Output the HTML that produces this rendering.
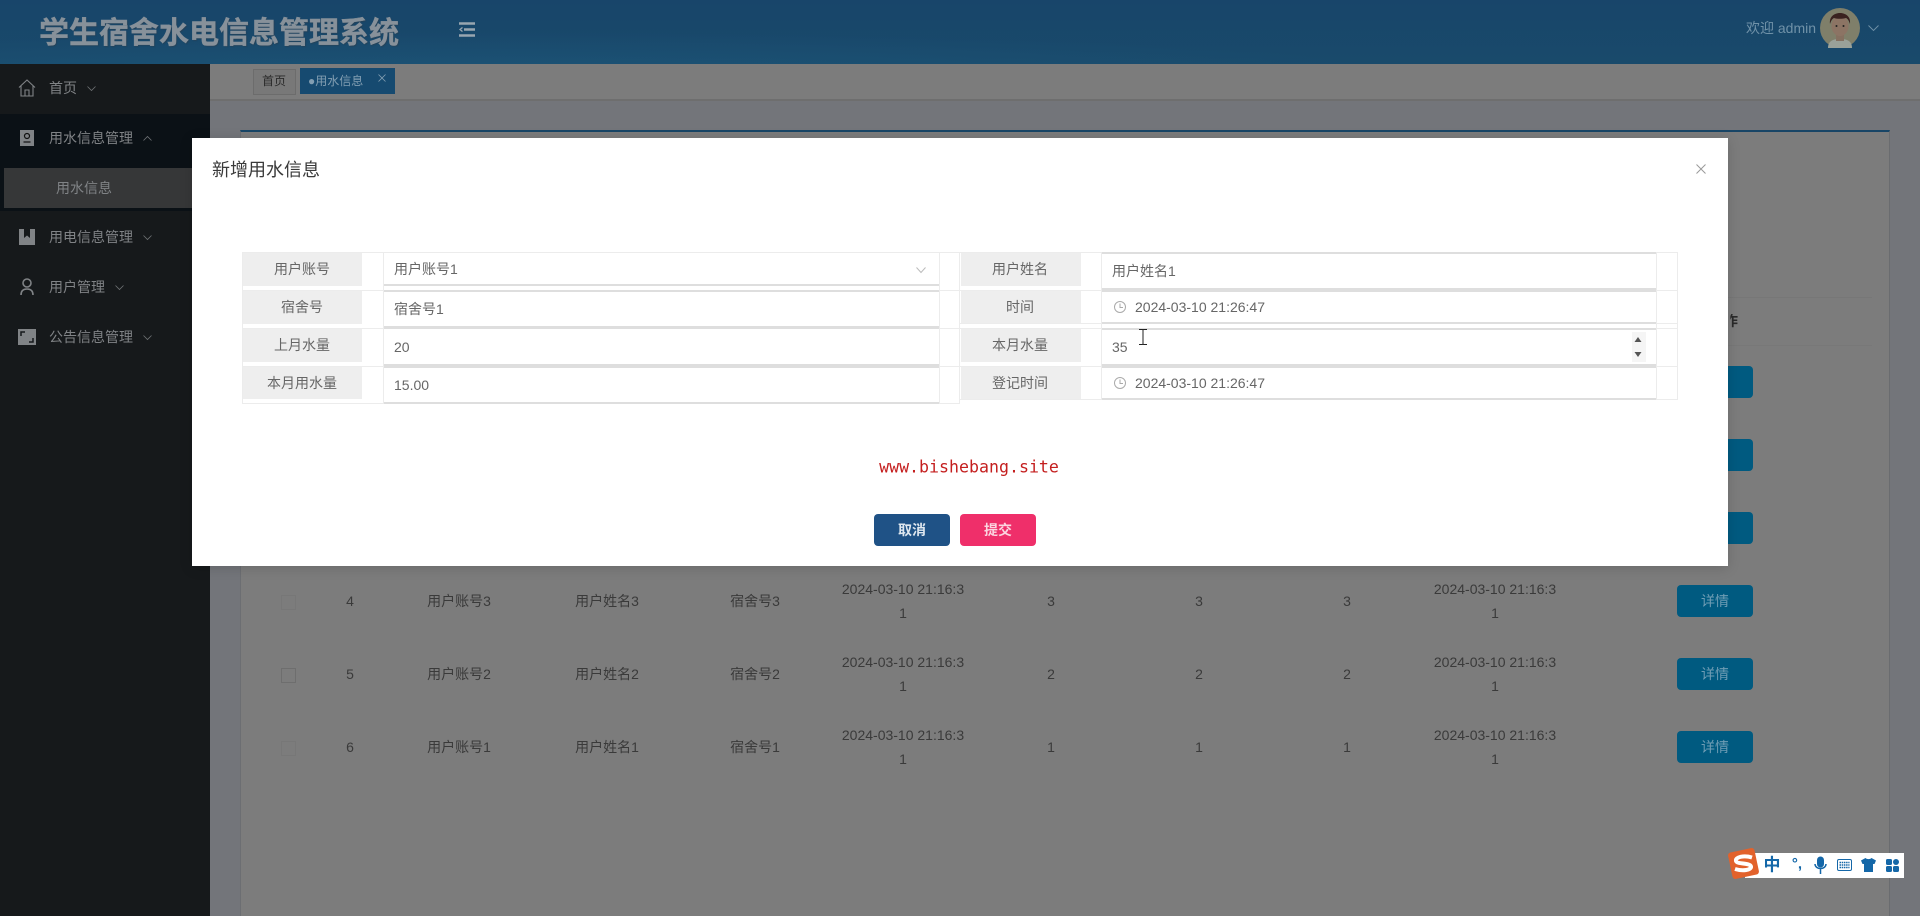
<!DOCTYPE html>
<html lang="zh"><head><meta charset="utf-8"><title>学生宿舍水电信息管理系统</title>
<style>
html,body{margin:0;padding:0;width:1920px;height:916px;overflow:hidden;background:#7c7c7c;font-family:"Liberation Sans","Noto Sans CJK SC",sans-serif;font-size:14px}
.a{position:absolute}
.c{position:absolute;white-space:nowrap;transform:translate(-50%,-50%);line-height:1}
.l{position:absolute;white-space:nowrap;transform:translateY(-50%);line-height:1}
.s{color:#808386}
.d{color:#3a3a3a}
.lb{position:absolute;background:#eee}
.g{position:absolute;background:#dedede}
.ln{position:absolute;background:#ececec}
.f{color:#666}
.btn{position:absolute;left:1677px;width:76px;height:32px;background:#005a80;border-radius:4px}
svg{position:absolute;overflow:visible}
</style></head><body>
<!-- header -->
<div class="a" style="left:0;top:0;width:1920px;height:64px;background:radial-gradient(ellipse 900px 40px at 500px 72px,rgba(35,105,145,.28),transparent),linear-gradient(#18456a,#194a6b)"></div>
<div class="l" style="left:39px;top:34px;font-size:30px;font-weight:bold;color:#87919a;-webkit-text-stroke:.4px #87919a;text-shadow:1px 1px 1px rgba(50,60,70,.5)">学生宿舍水电信息管理系统</div>
<svg style="left:459px;top:22px" width="16" height="15" fill="none" stroke="#98a6b0" stroke-width="2.400"><path d="M0 1.500H16M5 7.500H16M0 13.500H16"/><path d="M3.500 5.500L1 7.500l2.500 2" stroke-width="1.300"/></svg>
<div class="l" style="left:1746px;top:28px;color:#7092a8">欢迎 admin</div>
<svg style="left:1820px;top:8px" width="40" height="40" viewBox="0 0 40 40"><circle cx="20" cy="20" r="20" fill="#7f7f6a"/><path d="M8 40c0-7 5-9 12-9s12 2 12 9z" fill="#9aa199"/><rect x="16" y="24" width="8" height="9" fill="#857060"/><ellipse cx="20" cy="18" rx="8.500" ry="10" fill="#8c7464"/><path d="M10 16c-1-8 5-11 10-11s11 3 10 11c-1-3-2-5-4-6-4 1-9 1-12 0-2 1-3 3-4 6z" fill="#3a2220"/><circle cx="16.500" cy="18" r="1" fill="#222"/><circle cx="23.500" cy="18" r="1" fill="#222"/></svg>
<svg style="left:1868px;top:25px" width="11" height="6" fill="none" stroke="#7092a8" stroke-width=".9"><path d="M.5.500L5.500 5.500 10.500.5"/></svg>

<!-- sidebar -->
<div class="a" style="left:0;top:64px;width:210px;height:852px;background:#16191b"></div>
<div class="a" style="left:0;top:114px;width:210px;height:97px;background:#0b1116"></div>
<div class="a" style="left:4px;top:168px;width:206px;height:40px;background:#363738"></div>
<svg style="left:18px;top:79px" width="18" height="18" viewBox="0 0 18 18" fill="none" stroke="#808386" stroke-width="1.100"><path d="M1 8.500L9 1l8 7.500M3 7v10h12V7M7 17v-6h4v6"/></svg>
<div class="l s" style="left:49px;top:88px">首页</div>
<svg style="left:87px;top:86px" width="9" height="5" fill="none" stroke="#6f7275" stroke-width=".8"><path d="M.5.500L4.500 4.500 8.500.5"/></svg>
<svg style="left:20px;top:130px" width="14" height="16" viewBox="0 0 14 16"><rect width="14" height="16" fill="#808386"/><circle cx="7" cy="6" r="2.500" fill="none" stroke="#111" stroke-width="1.200"/><path d="M3.500 12h7" stroke="#111" stroke-width="1.200"/></svg>
<div class="l s" style="left:49px;top:138px">用水信息管理</div>
<svg style="left:143px;top:136px" width="9" height="5" fill="none" stroke="#6f7275" stroke-width=".8"><path d="M.5 4.500L4.500.5 8.500 4.500"/></svg>
<div class="l s" style="left:56px;top:188px">用水信息</div>
<svg style="left:19px;top:229px" width="16" height="16" viewBox="0 0 16 16"><rect width="16" height="16" fill="#808386"/><path d="M5 0h6v9L8 6.500 5 9z" fill="#16191b"/></svg>
<div class="l s" style="left:49px;top:237px">用电信息管理</div>
<svg style="left:143px;top:235px" width="9" height="5" fill="none" stroke="#6f7275" stroke-width=".8"><path d="M.5.500L4.500 4.500 8.500.5"/></svg>
<svg style="left:20px;top:278px" width="14" height="18" viewBox="0 0 14 18" fill="none" stroke="#808386" stroke-width="1.600"><circle cx="7" cy="5" r="4"/><path d="M1 17c0-4 2-6 6-6s6 2 6 6"/></svg>
<div class="l s" style="left:49px;top:287px">用户管理</div>
<svg style="left:115px;top:285px" width="9" height="5" fill="none" stroke="#6f7275" stroke-width=".8"><path d="M.5.500L4.500 4.500 8.500.5"/></svg>
<svg style="left:18px;top:329px" width="18" height="16" viewBox="0 0 18 16"><rect width="18" height="16" fill="#808386"/><path d="M3 7V3h4M15 9v4h-4" fill="none" stroke="#16191b" stroke-width="1.500"/></svg>
<div class="l s" style="left:49px;top:337px">公告信息管理</div>
<svg style="left:143px;top:335px" width="9" height="5" fill="none" stroke="#6f7275" stroke-width=".8"><path d="M.5.500L4.500 4.500 8.500.5"/></svg>

<!-- tab bar -->
<div class="a" style="left:210px;top:64px;width:1710px;height:35px;background:#7c7c7c;border-bottom:2px solid #6e6e6e"></div>
<div class="a" style="left:210px;top:101px;width:1710px;height:815px;background:#73757a"></div>
<div class="a" style="left:253px;top:69px;width:41px;height:24px;background:#787878;border:1px solid #6c6c6c"></div>
<div class="c" style="left:274px;top:81px;font-size:12px;color:#2a2a2a">首页</div>
<div class="a" style="left:300px;top:68px;width:95px;height:26px;background:#164a70"></div>
<div class="l" style="left:308px;top:81px;font-size:12px;color:#829eb2">●用水信息</div>
<svg style="left:378px;top:74px" width="8" height="8" fill="none" stroke="#829eb2" stroke-width=".8"><path d="M.5.500l7 7M7.500.5l-7 7"/></svg>

<!-- card -->
<div class="a" style="left:240px;top:130px;width:1650px;height:786px;background:#7c7c7c;border-top:2px solid #184566;border-right:1px solid #6a6c6f;border-left:1px solid #6c6e72;box-sizing:border-box"></div>
<div class="a" style="left:260px;top:297px;width:1612px;height:1px;background:#777"></div>
<div class="a" style="left:260px;top:345px;width:1612px;height:1px;background:#787878"></div>
<div class="c" style="left:1731px;top:321px;color:#2a2a2a;font-weight:bold;clip-path:inset(0 0 0 45%)">作</div>

<!-- buttons -->
<div class="btn" style="top:366px"></div><div class="btn" style="top:439px"></div><div class="btn" style="top:512px"></div>
<div class="btn" style="top:585px"></div><div class="btn" style="top:658px"></div><div class="btn" style="top:731px"></div>
<div class="c" style="left:1715px;top:601px;color:#6f9db4">详情</div>
<div class="c" style="left:1715px;top:674px;color:#6f9db4">详情</div>
<div class="c" style="left:1715px;top:747px;color:#6f9db4">详情</div>

<!-- table rows -->
<div class="a" style="left:281px;top:595px;width:13px;height:13px;border:1px solid #777"></div>
<div class="c d" style="left:350px;top:601px">4</div><div class="c d" style="left:459px;top:601px">用户账号3</div><div class="c d" style="left:607px;top:601px">用户姓名3</div><div class="c d" style="left:755px;top:601px">宿舍号3</div>
<div class="c d" style="left:903px;top:589px">2024-03-10 21:16:3</div><div class="c d" style="left:903px;top:613px">1</div>
<div class="c d" style="left:1051px;top:601px">3</div><div class="c d" style="left:1199px;top:601px">3</div><div class="c d" style="left:1347px;top:601px">3</div>
<div class="c d" style="left:1495px;top:589px">2024-03-10 21:16:3</div><div class="c d" style="left:1495px;top:613px">1</div>

<div class="a" style="left:281px;top:668px;width:13px;height:13px;border:1px solid #6e6e6e"></div>
<div class="c d" style="left:350px;top:674px">5</div><div class="c d" style="left:459px;top:674px">用户账号2</div><div class="c d" style="left:607px;top:674px">用户姓名2</div><div class="c d" style="left:755px;top:674px">宿舍号2</div>
<div class="c d" style="left:903px;top:662px">2024-03-10 21:16:3</div><div class="c d" style="left:903px;top:686px">1</div>
<div class="c d" style="left:1051px;top:674px">2</div><div class="c d" style="left:1199px;top:674px">2</div><div class="c d" style="left:1347px;top:674px">2</div>
<div class="c d" style="left:1495px;top:662px">2024-03-10 21:16:3</div><div class="c d" style="left:1495px;top:686px">1</div>

<div class="a" style="left:281px;top:741px;width:13px;height:13px;border:1px solid #777"></div>
<div class="c d" style="left:350px;top:747px">6</div><div class="c d" style="left:459px;top:747px">用户账号1</div><div class="c d" style="left:607px;top:747px">用户姓名1</div><div class="c d" style="left:755px;top:747px">宿舍号1</div>
<div class="c d" style="left:903px;top:735px">2024-03-10 21:16:3</div><div class="c d" style="left:903px;top:759px">1</div>
<div class="c d" style="left:1051px;top:747px">1</div><div class="c d" style="left:1199px;top:747px">1</div><div class="c d" style="left:1347px;top:747px">1</div>
<div class="c d" style="left:1495px;top:735px">2024-03-10 21:16:3</div><div class="c d" style="left:1495px;top:759px">1</div>

<!-- modal -->
<div class="a" style="left:192px;top:138px;width:1536px;height:428px;background:#fff;box-shadow:0 2px 12px rgba(0,0,0,.15)"></div>
<div class="l" style="left:212px;top:170px;font-size:18px;color:#3a3a3a">新增用水信息</div>
<svg style="left:1696px;top:164px" width="10" height="10" fill="none" stroke="#999"><path d="M.5.500l9 9M9.500.5l-9 9"/></svg>

<!-- left form -->
<div class="ln" style="left:242px;top:252px;width:717px;height:1px"></div>
<div class="ln" style="left:242px;top:290px;width:717px;height:1px"></div>
<div class="ln" style="left:242px;top:328px;width:717px;height:1px"></div>
<div class="ln" style="left:242px;top:366px;width:717px;height:1px"></div>
<div class="ln" style="left:242px;top:403px;width:717px;height:1px"></div>
<div class="ln" style="left:242px;top:252px;width:1px;height:152px"></div>
<div class="ln" style="left:959px;top:252px;width:1px;height:152px"></div>
<div class="ln" style="left:939px;top:252px;width:1px;height:152px"></div>
<div class="ln" style="left:383px;top:252px;width:1px;height:152px"></div>
<div class="lb" style="left:243px;top:253px;width:119px;height:33px"></div>
<div class="lb" style="left:243px;top:291px;width:119px;height:33px"></div>
<div class="lb" style="left:243px;top:329px;width:119px;height:33px"></div>
<div class="lb" style="left:243px;top:367px;width:119px;height:32px"></div>
<div class="g" style="left:384px;top:284px;width:555px;height:2px"></div>
<div class="g" style="left:384px;top:290px;width:555px;height:2px"></div>
<div class="g" style="left:384px;top:326px;width:555px;height:3px"></div>
<div class="g" style="left:384px;top:364px;width:555px;height:4px"></div>
<div class="g" style="left:384px;top:402px;width:555px;height:2px"></div>
<div class="c f" style="left:302px;top:269px">用户账号</div>
<div class="c f" style="left:302px;top:307px">宿舍号</div>
<div class="c f" style="left:302px;top:345px">上月水量</div>
<div class="c f" style="left:302px;top:383px">本月用水量</div>
<div class="l f" style="left:394px;top:269px">用户账号1</div>
<div class="l f" style="left:394px;top:309px">宿舍号1</div>
<div class="l f" style="left:394px;top:347px">20</div>
<div class="l f" style="left:394px;top:385px">15.00</div>
<svg style="left:916px;top:267px" width="10" height="6" fill="none" stroke="#bbb"><path d="M.5.500L5 5.500 9.500.5"/></svg>

<!-- right form -->
<div class="ln" style="left:960px;top:252px;width:717px;height:1px"></div>
<div class="ln" style="left:960px;top:290px;width:717px;height:1px"></div>
<div class="ln" style="left:960px;top:323px;width:717px;height:1px"></div>
<div class="ln" style="left:960px;top:328px;width:717px;height:1px"></div>
<div class="ln" style="left:960px;top:366px;width:717px;height:1px"></div>
<div class="ln" style="left:960px;top:399px;width:717px;height:1px"></div>
<div class="ln" style="left:1677px;top:252px;width:1px;height:148px"></div>
<div class="ln" style="left:1656px;top:252px;width:1px;height:148px"></div>
<div class="ln" style="left:1101px;top:252px;width:1px;height:148px"></div>
<div class="lb" style="left:961px;top:253px;width:120px;height:33px"></div>
<div class="lb" style="left:961px;top:291px;width:120px;height:32px"></div>
<div class="lb" style="left:961px;top:329px;width:120px;height:33px"></div>
<div class="lb" style="left:961px;top:367px;width:120px;height:32px"></div>
<div class="g" style="left:1102px;top:252px;width:554px;height:2px"></div>
<div class="g" style="left:1102px;top:288px;width:554px;height:4px"></div>
<div class="g" style="left:1102px;top:322px;width:554px;height:2px"></div>
<div class="g" style="left:1102px;top:328px;width:554px;height:2px"></div>
<div class="g" style="left:1102px;top:364px;width:554px;height:4px"></div>
<div class="g" style="left:1102px;top:398px;width:554px;height:2px"></div>
<div class="c f" style="left:1020px;top:269px">用户姓名</div>
<div class="c f" style="left:1020px;top:307px">时间</div>
<div class="c f" style="left:1020px;top:345px">本月水量</div>
<div class="c f" style="left:1020px;top:383px">登记时间</div>
<div class="l f" style="left:1112px;top:271px">用户姓名1</div>
<svg style="left:1114px;top:301px" width="12" height="12" fill="none" stroke="#aaa"><circle cx="6" cy="6" r="5.500"/><path d="M6 2.500V6.500H9"/></svg>
<div class="l f" style="left:1135px;top:307px">2024-03-10 21:26:47</div>
<div class="l f" style="left:1112px;top:347px">35</div>
<svg style="left:1114px;top:377px" width="12" height="12" fill="none" stroke="#aaa"><circle cx="6" cy="6" r="5.500"/><path d="M6 2.500V6.500H9"/></svg>
<div class="l f" style="left:1135px;top:383px">2024-03-10 21:26:47</div>
<div class="a" style="left:1632px;top:332px;width:14px;height:30px;background:#f5f5f5"></div>
<svg style="left:1634px;top:336px" width="8" height="22" fill="#555"><path d="M4 1l3.500 5h-7zM4 21L.5 16h7z"/></svg>
<svg style="left:1139px;top:329px" width="8" height="16" fill="none" stroke="#222" stroke-width="1"><path d="M0 .5h3.500L4 1l.5-.5H8M4 1v14M0 15.500h3.500L4 15l.5.500H8"/></svg>

<!-- footer -->
<div class="c" style="left:969px;top:468px;font-family:'DejaVu Sans Mono','Liberation Mono',monospace;font-size:16.600px;color:#c41f1f">www.bishebang.site</div>
<div class="a" style="left:874px;top:514px;width:76px;height:32px;background:#1f5286;border-radius:4px"></div>
<div class="c" style="left:912px;top:530px;color:#dfe8f0;font-weight:bold">取消</div>
<div class="a" style="left:960px;top:514px;width:76px;height:32px;background:#ef2f6a;border-radius:4px"></div>
<div class="c" style="left:998px;top:530px;color:#fbd5e0;font-weight:bold">提交</div>

<!-- IME bar -->
<div class="a" style="left:1745px;top:853px;width:159px;height:25px;background:#fff"></div>
<svg style="left:1728px;top:848px" width="31" height="31" viewBox="0 0 31 31"><rect x="2" y="2" width="27" height="27" rx="3" fill="#e2622c" transform="rotate(-12 15.500 15.500)"/><path d="M24 9.500C16 7 7 9 8 13c1 3.500 14 1.500 15 5.500 .5 3.500-8 5-16 2.500" fill="none" stroke="#fff" stroke-width="4"/></svg>
<div class="c" style="left:1772px;top:865px;font-size:17px;font-weight:bold;color:#1467a8">中</div>
<div class="c" style="left:1797px;top:864px;font-size:15px;font-weight:bold;color:#1467a8">°,</div>
<svg style="left:1814px;top:857px" width="13" height="17" viewBox="0 0 13 17" fill="none" stroke="#1467a8"><rect x="3.500" y="0" width="6" height="10" rx="3" fill="#1467a8"/><path d="M1 7c0 6 11 6 11 0M6.500 12v5" stroke-width="1.500"/></svg>
<svg style="left:1837px;top:859px" width="15" height="12" viewBox="0 0 15 12"><rect x=".5" y=".5" width="14" height="11" rx="1.500" fill="none" stroke="#1467a8"/><path d="M2.500 3.500h10M2.500 6h10M2.500 8.500h10" stroke="#1467a8" stroke-width="1.400" stroke-dasharray="1.500 .7"/></svg>
<svg style="left:1861px;top:858px" width="15" height="14" viewBox="0 0 15 14"><path d="M4.500 0C6 1.500 9 1.500 10.500 0L15 2.500 13.500 6H12v8H3V6H1.500L0 2.500z" fill="#1467a8"/></svg>
<svg style="left:1886px;top:859px" width="13" height="13" viewBox="0 0 13 13" fill="#1467a8"><rect width="6" height="6" rx="1.500"/><circle cx="10" cy="3" r="3"/><rect y="7" width="6" height="6" rx="1.500"/><rect x="7" y="7" width="6" height="6" rx="1.500"/></svg>
</body></html>
